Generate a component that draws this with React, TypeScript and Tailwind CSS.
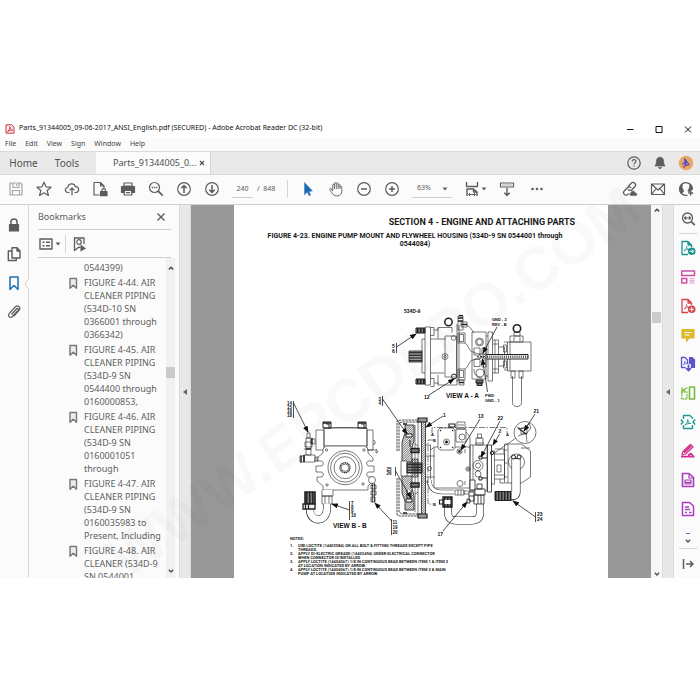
/**
 * PDF reader window
 * Title bar, menus, toolbar, bookmarks panel, document page and tool rail
 */

import React from 'react';

interface IconProps {
  children: React.ReactNode;
  className?: string;
}

const Icon: React.FC<IconProps> = ({ children, className = '' }) => (
  <svg
    viewBox="0 0 16 16"
    className={`block size-4 shrink-0 ${className}`}
    fill="none"
    stroke="currentColor"
    strokeWidth="1.2"
    strokeLinejoin="round"
    aria-hidden="true"
  >
    {children}
  </svg>
);

interface IconButtonProps {
  label: string;
  children: React.ReactNode;
  className?: string;
}

const IconButton: React.FC<IconButtonProps> = ({ label, children, className = '' }) => (
  <button type="button" aria-label={label} className={`shrink-0 ${className}`}>
    <Icon>{children}</Icon>
  </button>
);

const Caret: React.FC = () => (
  <svg viewBox="0 0 6 4" className="block h-1 w-1.5" fill="currentColor" aria-hidden="true">
    <path d="M.6.4h4.8L3 3.6z" />
  </svg>
);

const Chevron: React.FC<{ up?: boolean }> = ({ up }) => (
  <svg viewBox="0 0 8 6" className="block h-1.5 w-2 text-[#555]" fill="none" stroke="currentColor" strokeWidth="1.5" aria-hidden="true">
    <path d={up ? 'M1.8 4.4 4 2.2l2.2 2.2' : 'M1.8 1.8 4 4l2.2-2.2'} />
  </svg>
);

const TitleBar: React.FC = () => (
  <header className="flex h-[19px] items-center pl-[5px] text-[#111]">
    <svg viewBox="0 0 10 10" className="size-[10px]" fill="none" aria-hidden="true">
      <path d="M1 .8h5.6L9 3v6.2H1z" fill="#fdeeee" stroke="#c3353a" />
      <path d="M2.6 7.6C4.6 6 5.2 4 4.7 2.6c1 2.600 1.700 3.200 3 3.600-2-.2-3.400.2-5.100 1.400z" stroke="#c3353a" strokeWidth=".9" />
    </svg>
    <h1 className="ml-1 text-[7px] whitespace-nowrap">
      Parts_91344005_09-06-2017_ANSI_English.pdf (SECURED) - Adobe Acrobat Reader DC (32-bit)
    </h1>
    <div className="ml-auto flex gap-[13px] pr-1">
      <IconButton label="Minimize"><path d="M5 8.500h6.500" strokeWidth="1" /></IconButton>
      <IconButton label="Maximize"><path d="M5 5.500h6v6H5z" strokeWidth="1" /></IconButton>
      <IconButton label="Close"><path d="m5 5.500 6 6m0-6-6 6" strokeWidth="1" /></IconButton>
    </div>
  </header>
);

const MenuBar: React.FC = () => (
  <nav className="flex h-[13px] items-center gap-[9px] bg-[#fbfbfb] pl-[5px] text-[7px] text-[#444]">
    {['File', 'Edit', 'View', 'Sign', 'Window', 'Help'].map((m) => (
      <button key={m} type="button">{m}</button>
    ))}
  </nav>
);

const TabBar: React.FC = () => (
  <div className="flex h-6 items-stretch border-y border-[#dadada] bg-[#e9e9e9] text-[10px] text-[#505050]">
    <button type="button" className="w-[46px] pl-px">Home</button>
    <button type="button" className="w-[42px]">Tools</button>
    <div className="ml-2 flex w-[115px] items-center justify-between border-r border-[#d4d4d4] bg-[#fbfbfb] pr-1 pl-[17px] text-[9px]">
      <button type="button" className="whitespace-nowrap">Parts_91344005_0...</button>
      <button type="button" aria-label="Close tab">
        <svg viewBox="0 0 8 8" className="size-2" stroke="currentColor" strokeWidth="1.2"><path d="m2 2 4 4m0-4-4 4" /></svg>
      </button>
    </div>
    <div className="ml-auto flex items-center gap-[10px] pr-[6px] text-[#5c5c5c]">
      <IconButton label="Help">
        <circle cx="8" cy="8" r="6.200" />
        <path d="M6.200 6.500c0-2.600 3.800-2.400 3.700-.2 0 1.400-1.900 1.400-1.900 3M8 10.300v1.300" />
      </IconButton>
      <IconButton label="Notifications">
        <path d="M8 2.200c-2.900 0-3.600 2.300-3.600 4.300 0 2.300-.7 3.300-1.500 4.500h10.200c-.8-1.200-1.500-2.200-1.500-4.500 0-2-.7-4.300-3.600-4.300zM6.500 12.500h3c-.3 1.500-2.700 1.500-3 0z" fill="currentColor" strokeWidth=".7" />
      </IconButton>
      <IconButton label="Account">
        <circle cx="8" cy="8" r="7" fill="#e9a660" stroke="#d9a678" strokeWidth=".5" />
        <path d="M6.500 3.500 7.500 12M6.500 3.500l4.500 6-6 2M8 5v6M4 9l6-2" stroke="#5146cf" strokeWidth="1.100" />
        <circle cx="6" cy="12" r="1" fill="#d64c55" stroke="none" />
      </IconButton>
    </div>
  </div>
);

const Toolbar: React.FC = () => (
  <div className="flex h-[30px] items-center border-b border-[#cfcfcf] bg-[#fbfbfb] pr-[6px] pb-px pl-2 text-[#5c5c5c]">
    <div className="flex gap-3">
      <IconButton label="Save" className="text-[#a5a5a5]">
        <path d="M2 2h10.500L14 3.500V14H2zM5 2v4.500h6V2M4.500 14V9.500h7V14M8.700 3v2" />
      </IconButton>
      <IconButton label="Star">
        <path d="m8 1.200 2 4.600 5 .4-3.800 3.300 1.200 4.900L8 11.800l-4.400 2.600 1.200-4.900L1 6.200l5-.4z" />
      </IconButton>
      <IconButton label="Share to cloud">
        <path d="M5.500 11.500H4.200C.4 11.500.6 6.700 3.800 6.500 4 2 10.500 1.500 11.300 5.700c4.200-.1 4.500 5.600.7 5.800h-1.500M8 14.500V7M5.500 9.300 8 6.800l2.500 2.500" />
      </IconButton>
      <IconButton label="Protected file">
        <path d="M7.500 14H2V1.500h6.500L12 5v2M8.500 1.500V5H12" />
        <path d="M8.500 10.500h6.500v4.200H8.500z" fill="currentColor" />
        <path d="M10 10.500V9.200c0-2 3.500-2 3.500 0v1.300" />
      </IconButton>
      <IconButton label="Print">
        <path d="M4 2h8v3H4z" />
        <path d="M1.500 5.500h13v6h-2.500v-2H4v2H1.500z" fill="currentColor" />
        <path d="M4.200 9.500h7.600V14H4.200zM6 11.700h4" />
      </IconButton>
      <IconButton label="Find">
        <circle cx="6.500" cy="6.500" r="5" />
        <path d="m10.200 10.200 4.500 4.500" strokeWidth="1.800" />
        <path d="M3.800 6.500h1.300m.8 0h1.300m.8 0h1.300" strokeWidth="1.300" />
      </IconButton>
      <IconButton label="Previous page">
        <circle cx="8" cy="8" r="6.300" />
        <path d="M8 12V4.800M5.300 7.300 8 4.600l2.700 2.700" strokeWidth="1.500" />
      </IconButton>
      <IconButton label="Next page">
        <circle cx="8" cy="8" r="6.300" />
        <path d="M8 4v7.200M5.300 8.700 8 11.400l2.700-2.700" strokeWidth="1.500" />
      </IconButton>
    </div>
    <div className="ml-3 flex h-[18px] items-center text-[7px] whitespace-nowrap">
      <input aria-label="Page number" defaultValue="240" className="h-full w-[21px] border-b border-[#cfcfcf] text-center outline-none" />
      <span className="ml-1 w-5">/&nbsp; 848</span>
    </div>
    <span className="ml-[10px] h-[18px] w-px bg-[#d5d5d5]" />
    <div className="ml-3 flex gap-3">
      <IconButton label="Select" className="text-[#1c6bb5]">
        <path d="M4.500 1.500v12.200l2.800-2.600 1.700 3.700 1.600-.8-1.700-3.600 3.600-.4z" fill="currentColor" strokeWidth=".4" />
      </IconButton>
      <IconButton label="Hand">
        <path d="M4.700 10V4.200c0-1.300 1.700-1.300 1.700 0V2.700c0-1.400 1.900-1.400 1.900 0v-.2c0-1.300 1.900-1.300 1.900.2v1.500c0-1.300 1.800-1.300 1.800 0V6c.2-1.200 1.800-1 1.800.2v4c0 5.700-7.200 5.800-9 2.800L1.700 8.600c-.5-1.200 1-1.800 1.800-.8zM6.400 4v4M8.300 3v5M10.200 4v4M12 5.500V8" strokeWidth=".9" />
      </IconButton>
      <IconButton label="Zoom out"><circle cx="8" cy="8" r="6.300" /><path d="M5 8h6" strokeWidth="1.500" /></IconButton>
      <IconButton label="Zoom in"><circle cx="8" cy="8" r="6.300" /><path d="M5 8h6M8 5v6" strokeWidth="1.500" /></IconButton>
    </div>
    <div className="relative ml-3 flex h-[18px] w-10 items-center border-b border-[#cfcfcf]">
      <select aria-label="Zoom level" className="w-full appearance-none pl-[5px] text-[7px] outline-none">
        <option>63%</option>
      </select>
      <span className="pointer-events-none absolute right-1"><Caret /></span>
    </div>
    <button type="button" aria-label="Fit width" className="ml-3 flex items-center gap-px">
      <Icon>
        <path d="M2.500 1v4.500h11V1M3 15V8h6.500l3.500 3v4M9.500 8v3H13" strokeWidth="1.400" />
        <path d="M5 13.500h6M6 12l-1.500 1.500L6 15M10 12l1.500 1.500L10 15" strokeWidth="1" />
      </Icon>
      <Caret />
    </button>
    <IconButton label="Scroll mode" className="ml-3">
      <path d="M1.500 2h13v4h-13z" />
      <path d="M3.500 4h9" strokeDasharray="1 1" />
      <path d="M8 7v7.500M5.300 11.700 8 14.400l2.700-2.700" strokeWidth="1.400" />
    </IconButton>
    <IconButton label="More tools" className="ml-[14px]">
      <g fill="currentColor" stroke="none">
        <circle cx="3.500" cy="8" r="1.300" /><circle cx="8" cy="8" r="1.300" /><circle cx="12.500" cy="8" r="1.300" />
      </g>
    </IconButton>
    <div className="ml-auto flex gap-3">
      <IconButton label="Share link">
        <path d="M6 5.500 9.300 2.200c2.400-2.200 5.800 1.200 3.500 3.500L9.800 8.700c-1.300 1.200-3 .8-3.800-.4M9.200 7C8.300 5.800 6.700 5.500 5.400 6.700L2.200 10c-2 2.300 1.200 5.500 3.500 3.400l1-1" strokeWidth="1.300" />
        <path d="M9 14.500c-1.800 0-1.800-2.400 0-2.500.2-2.500 3.500-2.700 4 0 2.500 0 2.500 2.500.5 2.500z" fill="currentColor" strokeWidth=".6" />
      </IconButton>
      <IconButton label="Send by mail">
        <path d="M1.500 3h13v10.500h-13zM1.500 3 8 9l6.500-6M1.500 13.500l4.700-6m8.300 6-4.700-6" />
      </IconButton>
      <IconButton label="Add person">
        <path d="M9.500 14.200A6.400 6.400 0 1 1 14.300 8" strokeWidth="1.200" />
        <path d="M3.500 12.700C1 10 1.200 5 4.500 3 3.800 6 4.200 8 5.700 9.500c.2 1.500-1.200 2-2.200 3.200zM11.500 3c3 1.500 3.500 4.500 2.700 6h-1.700v1.500h-2.200c-.6-.3-.5-.8-.2-1.300C11.600 7.500 12 5 11.500 3z" fill="currentColor" strokeWidth=".6" />
        <path d="M12.700 9.500v5M10.200 12h5" strokeWidth="1.400" />
      </IconButton>
    </div>
  </div>
);

const LeftRail: React.FC = () => (
  <nav className="relative flex w-[29px] shrink-0 flex-col items-center gap-[13px] border-r border-[#d8d8d8] pt-3 text-[#5c5c5c]">
    <IconButton label="Security">
      <path d="M3.500 7.500h9V14h-9z" fill="currentColor" />
      <path d="M5 7.500V5c0-4 6-4 6 0v2.500" strokeWidth="1.500" />
    </IconButton>
    <IconButton label="Page thumbnails">
      <path d="M6 1.800h5L14 5v7H6zM11 1.800V5h3M6 5H2.300v9.500h8V12" strokeWidth="1.400" />
    </IconButton>
    <IconButton label="Bookmarks" className="text-[#1f6fae]">
      <path d="M4 2h8v12.500l-4-4-4 4z" strokeWidth="1.500" />
    </IconButton>
    <IconButton label="Attachments">
      <path d="m5.500 10.500 5-5.500c1.300-1.200 2.500 0 1.500 1.300l-5.600 6.200c-2.400 2.200-5.200-.4-3.200-2.800l6-6.700c2.900-2.600 6.200.5 3.800 3.400l-5 5.600" />
    </IconButton>
    <svg viewBox="0 0 5 12" className="absolute top-[73px] -right-px h-3 w-[5px]" fill="#fbfbfb" aria-hidden="true">
      <path d="M5 0 1 6l4 6" stroke="#d0d0d0" />
    </svg>
  </nav>
);

const bookmarks = [
  ['FIGURE 4-44. AIR', 'CLEANER PIPING', '(534D-10 SN', '0366001 through', '0366342)'],
  ['FIGURE 4-45. AIR', 'CLEANER PIPING', '(534D-9 SN', '0544400 through', '0160000853,'],
  ['FIGURE 4-46. AIR', 'CLEANER PIPING', '(534D-9 SN', '0160001051', 'through'],
  ['FIGURE 4-47. AIR', 'CLEANER PIPING', '(534D-9 SN', '0160035983 to', 'Present, Including'],
  ['FIGURE 4-48. AIR', 'CLEANER (534D-9', 'SN 0544001'],
];

const BookmarksPanel: React.FC = () => (
  <aside className="flex w-[150px] shrink-0 flex-col pl-[9px] text-[#5c5c5c]">
    <div className="mr-2 flex h-[25px] items-center justify-between border-b border-[#cfcfcf] pr-[2px]">
      <h2 className="text-[9px]">Bookmarks</h2>
      <IconButton label="Close panel"><path d="m4.500 4.500 7 7m0-7-7 7" strokeWidth="1.400" /></IconButton>
    </div>
    <div className="mr-2 flex h-7 shrink-0 items-center border-b border-[#cfcfcf]">
      <button type="button" aria-label="Options" className="flex items-center gap-px">
        <Icon>
          <path d="M2 3h12v10H2z" strokeWidth="1.400" />
          <path d="M4.500 6.300h2m1.500 0h4M4.500 9.700h2m1.500 0h4" strokeWidth="1.600" />
        </Icon>
        <Caret />
      </button>
      <span className="ml-1 h-[18px] w-px bg-[#d5d5d5]" />
      <IconButton label="Find current bookmark" className="ml-[5px]">
        <path d="M13 8V2H3.500v12.500L8 11l1.500 1" strokeWidth="1.300" />
        <circle cx="8" cy="6" r="2.300" />
        <path d="m9.500 8.500 5.500 4-5.500 3z" fill="currentColor" stroke="none" />
      </IconButton>
    </div>
    <div className="flex min-h-0 flex-1">
      <ul className="flex min-w-0 flex-1 flex-col gap-[2px] overflow-hidden pt-[3px] pl-[27px] text-[9px] leading-[13px] whitespace-nowrap text-[#606060]">
        <li className="shrink-0 pl-[19px]"><a href="#prev">0544399)</a></li>
        {bookmarks.map((lines) => (
          <li key={lines[0]} className="flex shrink-0 gap-[3px]">
            <Icon className="text-[#777]">
              <path d="M5 2.500h6.500v9.800L8.200 9.200 5 12.300z" strokeWidth="1.400" fill="#ececec" />
            </Icon>
            <a href={`#${lines[0].slice(7, 11)}`}>
              {lines.map((line) => <span key={line} className="block">{line}</span>)}
            </a>
          </li>
        ))}
      </ul>
      <div className="mr-1 flex w-[9px] shrink-0 flex-col items-center justify-between bg-[#f1f1f1] pt-[7px] pb-[4px]">
        <Chevron up />
        <span className="mb-[94px] h-[11px] w-full bg-[#cbcbcb]" />
        <Chevron />
      </div>
    </div>
  </aside>
);

const CollapseStrip: React.FC<{ label: string }> = ({ label }) => (
  <button type="button" aria-label={label} className="flex w-[12px] shrink-0 items-center justify-center border-x border-[#dcdcdc] bg-[#e8e8e8] text-[#666]">
    <svg viewBox="0 0 4 6" className="h-1.5 w-1" fill="currentColor"><path d="M4 0v6L0 3z" /></svg>
  </button>
);

interface LeaderProps {
  d: string;
}

const Leader: React.FC<LeaderProps> = ({ d }) => <path d={d} strokeWidth=".8" markerEnd="url(#tip)" />;

interface CalloutProps {
  x: number;
  y: number;
  lines: string[];
  size?: number;
  step?: number;
}

const Callout: React.FC<CalloutProps> = ({ x, y, lines, size = 5, step = 5 }) => (
  <g fill="#111" stroke="none" fontSize={size} fontWeight="700">
    {lines.map((t, i) => (
      <text key={t} x={x} y={y + i * step}>{t}</text>
    ))}
  </g>
);

const PumpDrawing: React.FC = () => (
  <svg
    viewBox="234 300 374 237"
    className="block w-full font-['Liberation_Sans',sans-serif]"
    fill="none"
    stroke="#222"
    strokeWidth=".6"
    role="img"
    aria-label="Engine pump mount and flywheel housing"
  >
    <defs>
      <marker id="tip" viewBox="0 0 8 6" refX="7" refY="3" markerWidth="7" markerHeight="5" markerUnits="userSpaceOnUse" orient="auto">
        <path d="M0 0 8 3 0 6z" fill="#111" stroke="none" />
      </marker>
      <pattern id="hatch" width="1.600" height="1.600" patternUnits="userSpaceOnUse" patternTransform="rotate(45)">
        <path d="M0 0v1.600" stroke="#333" strokeWidth="1.100" />
      </pattern>
      <pattern id="thread" width="1.500" height="4" patternUnits="userSpaceOnUse">
        <path d="M0 0h1.100v4H0z" fill="#111" stroke="none" />
      </pattern>
      <pattern id="spline" width="4" height="1.600" patternUnits="userSpaceOnUse">
        <path d="M0 0h4v1.100H0z" fill="#222" stroke="none" />
      </pattern>
    </defs>

    {/* View A-A */}
    <g>
      <circle cx="448.500" cy="322" r="3.700" strokeWidth="1.500" />
      <path d="M425 327h5.500v58H425zM430.500 327.500h3.500v8h-3.500m0 43h3.500v8h-3.500M425 339h-3v34h3M430.500 339h15m-15 34h14M434 330h4v-2.500h14v5M434 383h4v2h19v-5M438 328v10.500m0 36.500v9" />
      <path d="M416 328h9v5h-9zM416 379h9v5h-9z" fill="url(#thread)" strokeWidth="1" />
      <path d="M409 351h13v11h-13z" fill="url(#spline)" strokeWidth=".8" />
      <path d="M445 336h11.500v41H445zM457 324v58M459 325v56M458 316h5v14h-5zM461 322h6v5h-6zM458 333h7v10h-7zM459.500 334.500h4v7h-4zM458 369h7v11h-7zM459.500 370.500h4v7h-4zM459 380h5v5h-5z" />
      <path d="M458 318h5m-5 3h5M461 324.500h6M459 382.500h5" strokeWidth="1.500" />
      <path d="M459 315.500h4" strokeWidth="1.200" />
      <path d="M467 325c4 3 5 5 7 8m-9 10c4 2 3 8 8 9l5 2h6M465 369c4-2 3-8 8-9l5-2h6" />
      <path d="M472 332h14v47h-14zM474 348h6v7h-6zM474 359.500h6v7h-6zM482 348h4v6h-4zM482 360h4v7h-4z" />
      <circle cx="479.500" cy="342" r="4" /><circle cx="479.500" cy="342" r="2.800" />
      <circle cx="480" cy="373" r="4" /><path d="M474 369c0 6 3 9 8 9" />
      <circle cx="445" cy="356.500" r="3" /><circle cx="445" cy="356.500" r="1.200" />
      <circle cx="453.500" cy="338" r="2.300" /><circle cx="454" cy="376.500" r="2.500" strokeWidth="1" />
      <path d="M476 380h7v3h-7zM477 383h5v2.500h-5z" fill="#777" strokeWidth="1" />
      <path d="M488 332h4.500v49H488zM486 336h2m-2 40h2M492.500 340h6v33h-6M495 340v33M498.500 347h6v19h-6M504 342h3.500m-3.500 28h3.500M503.500 345h3v7h-3zM503.500 361h3v7h-3zM493 344h5m-5 25h5" />
      <path d="M507.500 342h23.500v29h-23.500zM510 342v29M510 336h13v6h-13zM514 332h6v4h-6zM514 337v4m6-4v4M511 371h4v7h-4zM519 371h4v7h-4z" />
      <circle cx="517" cy="328.500" r="3.700" strokeWidth="1.600" />
      <path d="M512.500 376v26.500c0 5.500 9 5.500 9 0V376" />
      <path d="M486 354.500h42v4.500h-42z" fill="#fff" strokeWidth="1" />
      <path d="M487 356.800h41" stroke="#555" strokeWidth="2.600" strokeDasharray="1 .9" />
      <path d="M477 356.700h9" strokeDasharray="2 1" strokeWidth="1" />
      <path d="M479 354l6 5m0-5-6 5" />
    </g>
    <Callout x={404} y={313} lines={['534D-9']} />
    <Callout x={492} y={321} lines={['GND - 2', 'REV - B']} size={4} />
    <Callout x={485} y={397} lines={['FWD', 'GND - 1']} size={4} />
    <Callout x={424} y={399} lines={['12']} />
    <Callout x={392} y={348} lines={['5', '6']} />
    <Callout x={446} y={398} lines={['VIEW A - A']} size={6.500} />
    <path d="M396.500 343v10" strokeWidth=".8" />
    <Leader d="M396.500 347 416 334" />
    <Leader d="M497 327 483 353" />
    <Leader d="M487.500 392 482.500 359" />
    <Leader d="M429 395 454 379" />

    {/* View B-B */}
    <g>
      <path d="M316 430h8v20h-8zM367 430h6v20h-6zM324 428h43v18h-43zM324 428.500c8-1 8-.5 14-1h14c8 .5 8 0 15 1" />
      <path d="M323 422h8v6h-8zM358 422h8v6h-8zM326 424h3v4M361 424h3v4" strokeWidth="1" />
      <path d="M323 423h8M358 423h8" strokeWidth="1.400" />
      <path d="M323 449l3-3h39l3 3v4l5 5v3h-4c-3 0-3 5 0 5h5v6h-5c-3 0-3 5 0 5h4v4l-5 5v4h-45v-4l-6-5v-4h4c3 0 3-5 0-5h-5v-6h5c3 0 3-5 0-5h-4v-3l6-5z" fill="#fff" />
      <circle cx="345" cy="467.700" r="17" /><circle cx="345" cy="467.700" r="14.500" /><circle cx="345" cy="467.700" r="11" />
      <circle cx="345" cy="467.700" r="5" strokeWidth="1.200" strokeDasharray="1.400 .5" /><circle cx="345" cy="467.700" r="3.700" />
      <circle cx="326.500" cy="450" r="1.200" /><circle cx="364" cy="450" r="1.200" /><circle cx="327" cy="485" r="1.200" /><circle cx="363" cy="484" r="1.200" />
      <path d="M306 438h5v17h-5zM305 442h7v5h-7zM307 433h3v5h-3zM311 439h4v5h-4zM304 449h7M304 455h11v7h-11zM300 456h4v6h-4zM315 457h3v4h-3z" />
      <path d="M301 455.500v7M304 455v7M306 449h5M312 438v6" strokeWidth="1.400" />
      <path d="M373 440l2 1v3h-2M367 450h8m1-1 2 3-2 1z" />
      <path d="M322 490v6h11v-6M322 496h10v8h-10zM325 496v8m4-8v8" fill="#fff" />
      <path d="M327 504v4c0 15-17 15-17 2" strokeWidth="8" />
      <path d="M327 503.500v4.500c0 15-17 15-17 1" stroke="#fff" strokeWidth="6.800" />
      <path d="M305 492h10v12h-10z" fill="url(#thread)" strokeWidth="1.600" />
      <path d="M303 504h12v5h-12z" fill="#eee" strokeWidth="1.300" />
      <path d="M305.500 504v5m3-5v5" strokeWidth="1.200" />
      <circle cx="372" cy="480" r="3.500" fill="#fff" />
      <path d="M372.500 483v19m2-19v19M371 485h5v4h-5zM371 491h5v4h-5zM371 497h4v5h-4z" fill="#ddd" strokeWidth=".7" />
    </g>
    <Callout x={287} y={405} lines={['14', '15', '16', '18']} size={4.500} step={4} />
    <Callout x={351} y={505} lines={['7', '8', '9', '10']} size={4.500} step={4} />
    <Callout x={392.500} y={524} lines={['11', '19', '20']} size={4.500} step={5} />
    <Callout x={333} y={528} lines={['VIEW B - B']} size={6.500} />
    <path d="M293.500 401v17M349.500 501v19M391.500 519v16" strokeWidth=".8" />
    <Leader d="M293.500 403 308 432" />
    <Leader d="M349.500 510 332 504" />
    <Leader d="M391.500 521 375 503" />

    {/* Flywheel housing */}
    <g>
      <path d="M397 451v-30l4-1h22M397 478v37l3 1h23M399 451v-28l3-1h19M399 478v34l3 2h19" strokeDasharray="2.500 .7" strokeWidth=".8" />
      <path d="M421.500 419h4v98h-4z" fill="url(#hatch)" strokeWidth=".8" />
      <path d="M405 425h9v15l-2 8v14h-7v14h7v12l2 8v14h-9v-9l-3-8v-51l3-9z" fill="url(#hatch)" strokeWidth=".8" />
      <path d="M412 459h6v18h-6z" fill="url(#hatch)" />
      <path d="M401 461h6v15h-6z" fill="#fff" />
      <path d="M407 463h15v10h-15z" fill="url(#spline)" strokeWidth="1" />
      <path d="M415 425v87M418 422v92M415 444l3 2m-3 48 3-2" />
      <path d="M411 448.500h8v4h-8zM411 483h8v4h-8z" fill="#777" strokeWidth="1.400" />
      <path d="M406 434h6v3h-6zM406 499h6v3h-6zM410 440v7m-3 43v8h4v-8" fill="#fff" strokeWidth="1" />
      <path d="M418 418h9v4h-9zM418 514h9v4h-9z" fill="#999" strokeWidth="1.200" />
      <path d="M403 424h4m-4 89h4" strokeWidth="1.500" />
    </g>

    {/* Pump side view */}
    <g>
      <path d="M425.500 445h5v37h-5M430.500 450l4-3h35.500v41h-39v-6M434 447v41M425.500 456h9m-9 21h9" />
      <circle cx="429.500" cy="468.500" r="2" />
      <path d="M440 428h13l2 2v18l-2 2h-13l-2-2v-18z" fill="#fff" />
      <circle cx="446.500" cy="442" r="3" /><circle cx="446.500" cy="442" r="1.300" fill="#222" />
      <path d="M440.500 430.500h.1m12 0h.1m-12.200 17h.1m12 0h.1" strokeWidth="1.500" strokeLinecap="round" />
      <path d="M449 424h6v3h-6zM451 427v1" strokeWidth="1.200" />
      <path d="M457 422h8v7h-8zM456 429h10v13h-10zM466 432l4 5v10M458 425h6" />
      <circle cx="462" cy="437" r="3" />
      <circle cx="459.500" cy="451.500" r="2.600" /><circle cx="459.500" cy="451.500" r="1.200" fill="#444" />
      <circle cx="460" cy="483.500" r="3" /><circle cx="468" cy="469" r="2.200" /><circle cx="468" cy="469" r="1" />
      <path d="M476 438h7v7h-7zM477.500 434h4v4h-4zM475 443h9M464 450h2m-2 2h2M464 482h2m-2 2h2" />
      <path d="M470 445h17v46h-17zM473 445v46" />
      <circle cx="478" cy="465.500" r="5" /><circle cx="478" cy="465.500" r="2.500" /><circle cx="478" cy="474" r="3" />
      <path d="M479 456h3v3h-3zM479 477h3v3h-3zM482 458h5m-5 20h5" strokeWidth="1" />
      <path d="M487.500 445h4v47h-4z" fill="#fff" strokeWidth=".8" />
      <path d="M491.500 451h3v33h-3M494.500 454h10v25h-10M497 465h4v7h-4zM494.500 460h10m-10 15h10M504.500 444h17l9 7v26l-9 6h-17zM508 444v39M504.500 450h3m-3 13h3m-3 14h3M521 448h9M495 449h9v5M500 479v4h4" />
      <circle cx="492" cy="453" r="1.700" strokeWidth="1" />
      <circle cx="525" cy="432.500" r="11" />
      <path d="M516 438 493 454M517 427c5 3 8 2 12-4M518 436l8-3 1 9M529 423l2 5-5 6M521 428h6v6h-6z" />
      <path d="M518 428l8 6" strokeWidth="1.200" />
      <path d="M429 480c1 10 6 12 14 12h11" strokeWidth="4.500" /><path d="M429 479c1 11 6 13 14 13h12" stroke="#fff" strokeWidth="3.400" />
      <path d="M455 490h9v5h-9zM464 491h6v3h-6zM458 490v5m3-5v5" fill="#fff" />
      <path d="M448 506v6c0 7 3 8.500 9 8.500h14c6 0 9-2 9-8V503" strokeWidth="8" />
      <path d="M448 505.500v6.500c0 7 3 8.500 9 8.500h14c6 0 9-2 9-8v-10" stroke="#fff" strokeWidth="6.800" />
      <path d="M443 497h9v10h-9z" fill="url(#thread)" strokeWidth="1.400" />
      <path d="M439.500 500h4v4h-4z" strokeWidth="1.200" />
      <path d="M444.500 500h6v4h-6z" fill="#fff" stroke="none" />
      <path d="M470 480h5v10h-5zM475 489h10v6h-10zM474 495h10v9h-10zM478 495v9m3-9v9M469 492h5v9h-5zM469 496h5M467 499h3v4h-3zM477 484h5v5h-5z" fill="#fff" strokeWidth=".8" />
      <circle cx="516.500" cy="462" r="8" />
      <path d="M516 458v34c0 3-2 4-5 4" strokeWidth="9" /><path d="M516 459v33c0 3-2 3.500-5 3.500" stroke="#fff" strokeWidth="7.800" />
      <circle cx="513.500" cy="457" r="2" fill="#fff" strokeWidth="1" /><circle cx="519" cy="457" r="2" fill="#fff" strokeWidth="1" />
      <path d="M495 491.500h16v9h-16z" fill="url(#thread)" strokeWidth="1" />
      <path d="M432 433v-5.500h75v5.500M433 440h-5v64h5" strokeDasharray="6 1.500 1.500 1.500" />
    </g>
    <Callout x={431} y={436} lines={['A']} size={4} />
    <Callout x={506} y={436} lines={['A']} size={4} />
    <Callout x={433} y={441.500} lines={['B']} size={4} />
    <Callout x={433} y={505.500} lines={['B']} size={4} />
    <Callout x={378.500} y={401} lines={['3', '4']} size={4.500} step={4} />
    <Callout x={386.500} y={470.500} lines={['25', '26']} size={4.500} step={4.500} />
    <Callout x={443} y={417} lines={['1']} />
    <Callout x={478} y={417.500} lines={['13']} />
    <Callout x={497.500} y={420} lines={['22']} />
    <Callout x={498.500} y={433} lines={['2']} />
    <Callout x={533.500} y={412.500} lines={['21']} />
    <Callout x={437.500} y={535.500} lines={['17']} />
    <Callout x={537} y={516} lines={['23', '24']} />
    <path d="M382.500 396v10M395.500 467v9M535.500 512v10" strokeWidth=".8" />
    <Leader d="M382.500 399 407 434" />
    <Leader d="M395.500 471 411 498" />
    <Leader d="M443 416 426 427" />
    <Leader d="M480 419 461 450" />
    <Leader d="M500 421 481 457" />
    <Leader d="M499.500 434 493 445" />
    <Leader d="M535 414 524 431" />
    <Leader d="M535.500 517 513 501" />
    <Leader d="M443 531 467 502" />
  </svg>
);

const notes = [
  ['USE LOCTITE (14403084) ON ALL BOLT & FITTING THREADS EXCEPT PIPE', 'THREADS.'],
  ['APPLY DI-ELECTRIC GREASE (14403494) UNDER ELECTRICAL CONNECTOR', 'WHEN CONNECTOR IS INSTALLED'],
  ['APPLY LOCTITE (14404067) 1/8 IN CONTINUOUS BEAD BETWEEN ITEM 1 & ITEM 2', 'AT LOCATION INDICATED BY ARROW.'],
  ['APPLY LOCTITE (14404067) 1/8 IN CONTINUOUS BEAD BETWEEN ITEM 2 & MAIN', 'PUMP AT LOCATION INDICATED BY ARROW.'],
];

const DocumentPage: React.FC = () => (
  <main className="min-w-0 flex-1 overflow-hidden bg-[#989898] px-[43px]">
    <article className="min-h-full bg-white pt-[11px] font-['Roboto',sans-serif] font-bold text-[#1a1a1a]">
      <h2 className="pr-[33px] text-right text-[9px] leading-3">SECTION 4 - ENGINE AND ATTACHING PARTS</h2>
      <h3 className="mt-[4px] pr-8 pl-5 text-center text-[7px] leading-2">
        FIGURE 4-23. ENGINE PUMP MOUNT AND FLYWHEEL HOUSING (534D-9 SN 0544001 through
        <br />
        0544084)
      </h3>
      <div className="mt-[52px]"><PumpDrawing /></div>
      <div className="pl-14 text-[4px] leading-[4px] whitespace-nowrap">
        <p>NOTES:</p>
        <ol className="mt-[3px]">
          {notes.map((lines, i) => (
            <li key={i} className="flex">
              <span className="w-2">{i + 1}.</span>
              <span>{lines[0]}<br />{lines[1]}</span>
            </li>
          ))}
        </ol>
      </div>
    </article>
  </main>
);

const ToolRail: React.FC = () => (
  <nav className="flex w-[26px] shrink-0 flex-col items-center gap-[13px] pt-[6px] pl-[2px]">
    <IconButton label="Search tools" className="text-[#5c5c5c]">
      <circle cx="7.500" cy="7" r="5" strokeWidth="1.300" />
      <path d="m11.200 10.700 3.500 3.500" strokeWidth="1.800" /><path d="M4.500 7h6M6 5.500 4.500 7 6 8.500m3-3L10.500 7 9 8.500" strokeWidth="1.200" />
    </IconButton>
    <span className="-my-[7px] h-px w-[18px] shrink-0 bg-[#d3d3d3]" />
    <IconButton label="Export PDF" className="text-[#1e9490]">
      <path d="M8 14.500H2v-13h6L11.500 5v2M8 1.500V5h3.500" strokeWidth="1.300" />
      <path d="M4 11c2-1.500 2.700-3 2.500-4.500.5 2 1.500 2.500 2.500 3-2-.3-3.500.3-5 1.500z" strokeWidth=".8" />
      <circle cx="11.700" cy="11.300" r="3.800" fill="currentColor" stroke="none" />
      <path d="M9.500 11.300h4m-1.500-1.700 1.700 1.700-1.700 1.700" stroke="#fff" strokeWidth="1" />
    </IconButton>
    <IconButton label="Edit PDF" className="text-[#cf4fa5]">
      <path d="M1.700 2h12.800v4.500H1.700zM1.700 9.500h5V14h-5z" strokeWidth="1.500" />
      <path d="M9.500 9.700h5m-5 2.200h5m-5 2.100h5" strokeWidth="1.100" opacity=".6" />
    </IconButton>
    <IconButton label="Create PDF" className="text-[#d5424c]">
      <path d="M8 14.500H2v-13h6L11.500 5v2M8 1.500V5h3.500" strokeWidth="1.300" />
      <path d="M4 11c2-1.500 2.700-3 2.500-4.500.5 2 1.500 2.500 2.500 3-2-.3-3.500.3-5 1.500z" strokeWidth=".8" />
      <circle cx="11.700" cy="11.300" r="3.800" fill="currentColor" stroke="none" />
      <path d="M9.500 11.300h4.400m-2.200-2.200v4.400" stroke="#fff" strokeWidth="1" />
    </IconButton>
    <IconButton label="Comment" className="text-[#dcb92c]">
      <path d="M2 2.500h12v8.500H9l-2.500 3.500V11H2z" fill="currentColor" strokeWidth="1.200" />
      <path d="M4.500 5.500h7m-7 2.500h5" stroke="#fff" />
    </IconButton>
    <IconButton label="Combine files" className="text-[#5a55cc]">
      <path d="M5.500 11.500H1.500v-10H5L7.500 4v4" strokeWidth="1.300" />
      <path d="M3 9c1.500-1 2-2.500 1.800-4 .3 1.500 1 2.300 2 2.800C5.300 7.600 4.200 8 3 9z" strokeWidth=".7" />
      <path d="M9.500 1.500H12l2.500 2.500v7.500h-3V7.500h-2z" fill="currentColor" />
      <path d="M8.500 8.500v6M6 12l2.500 2.600L11 12" strokeWidth="1.700" />
    </IconButton>
    <IconButton label="Organize pages" className="text-[#76bd3c]">
      <path d="M9.500 2h5v12h-5z" strokeWidth="1.600" />
      <path d="M1.700 7v7H7V7z" strokeDasharray="1.700 .9" strokeWidth="1.400" />
      <path d="M7.500 2.500 2.500 5.500M2 2.500v3.300h3.500" strokeWidth="1.300" />
    </IconButton>
    <IconButton label="Compress PDF" className="text-[#1f9a97]">
      <path d="M3.500 5V1.500H10L12.500 4v1M3.500 11v3.500h9V11" strokeWidth="1.400" />
      <path d="M.8 5.500 3 8 .8 10.500M15.200 5.500 13 8l2.200 2.500" strokeWidth="1.400" />
      <path d="M5 11c2-2 2.800-3.500 2.700-5.500.5 2.500 1.500 3.500 3 4-2.200-.2-4 .2-5.700 1.500z" strokeWidth="1" />
    </IconButton>
    <IconButton label="Fill and sign" className="text-[#cf2f8b]">
      <path d="m2 12 1-3.500L10.500 1.500 13 4l-7.500 7z" strokeWidth="1.300" /><path d="m4 9.500 7-6.500" strokeWidth="1.800" />
      <path d="M1 13.700h13.500M8 12.500l3-2 2 2.500" strokeWidth="1.700" />
    </IconButton>
    <IconButton label="Send for review" className="text-[#a63fba]">
      <path d="M2.500 1.500H9L13.500 5.500v9h-11z" strokeWidth="1.600" /><path d="M5 8h6v4H5zM9 2v4h4" /><path d="M5 10.500h6" strokeWidth="1.500" />
    </IconButton>
    <IconButton label="Prepare form" className="text-[#a63fba]">
      <path d="M2.500 1.500h7l4 3.500v9.500h-11z" strokeWidth="1.500" /><path d="M5 6h4M5 8.500h5M5 11.500h2m2 0h2.500" strokeWidth="1.600" />
    </IconButton>
    <div className="flex flex-col items-center gap-1 pt-[3px]">
      <span className="h-px w-1 bg-[#8a55dd]" />
      <button type="button" aria-label="More"><Chevron /></button>
      <span className="h-px w-[18px] bg-[#d3d3d3]" />
    </div>
    <IconButton label="Expand" className="-mt-[6px] text-[#5c5c5c]">
      <path d="M3.500 3v10M6 8h7M10 5l3 3-3 3" strokeWidth="1.500" />
    </IconButton>
  </nav>
);

const App: React.FC = () => (
  <div className="flex h-screen flex-col bg-white pt-[119px] pb-[122px] font-['Noto_Sans','Open_Sans',sans-serif]">
    <div className="relative flex min-h-0 flex-1 flex-col overflow-hidden">
      <TitleBar />
      <MenuBar />
      <TabBar />
      <Toolbar />
      <div className="flex min-h-0 flex-1 overflow-hidden bg-[#fbfbfb]">
        <LeftRail />
        <BookmarksPanel />
        <CollapseStrip label="Hide bookmarks" />
        <DocumentPage />
        <div className="flex w-[11px] shrink-0 flex-col items-center justify-between bg-[#f7f7f7] px-px pt-[2px] pb-px">
          <Chevron up />
          <span className="mb-[150px] h-[11px] w-full bg-[#cbcbcb]" />
          <Chevron />
        </div>
        <CollapseStrip label="Hide tools" />
        <ToolRail />
      </div>
      <svg viewBox="0 0 700 459" className="pointer-events-none absolute inset-0 size-full" aria-hidden="true">
        <text
          x="374"
          y="284"
          textAnchor="middle"
          transform="rotate(-35 374 264)"
          className="font-['Liberation_Sans',sans-serif] text-[60px] font-bold"
          fill="#000"
          fillOpacity=".025"
        >
          WWW.EPCDEPO.COM
        </text>
      </svg>
    </div>
  </div>
);

export default App;
